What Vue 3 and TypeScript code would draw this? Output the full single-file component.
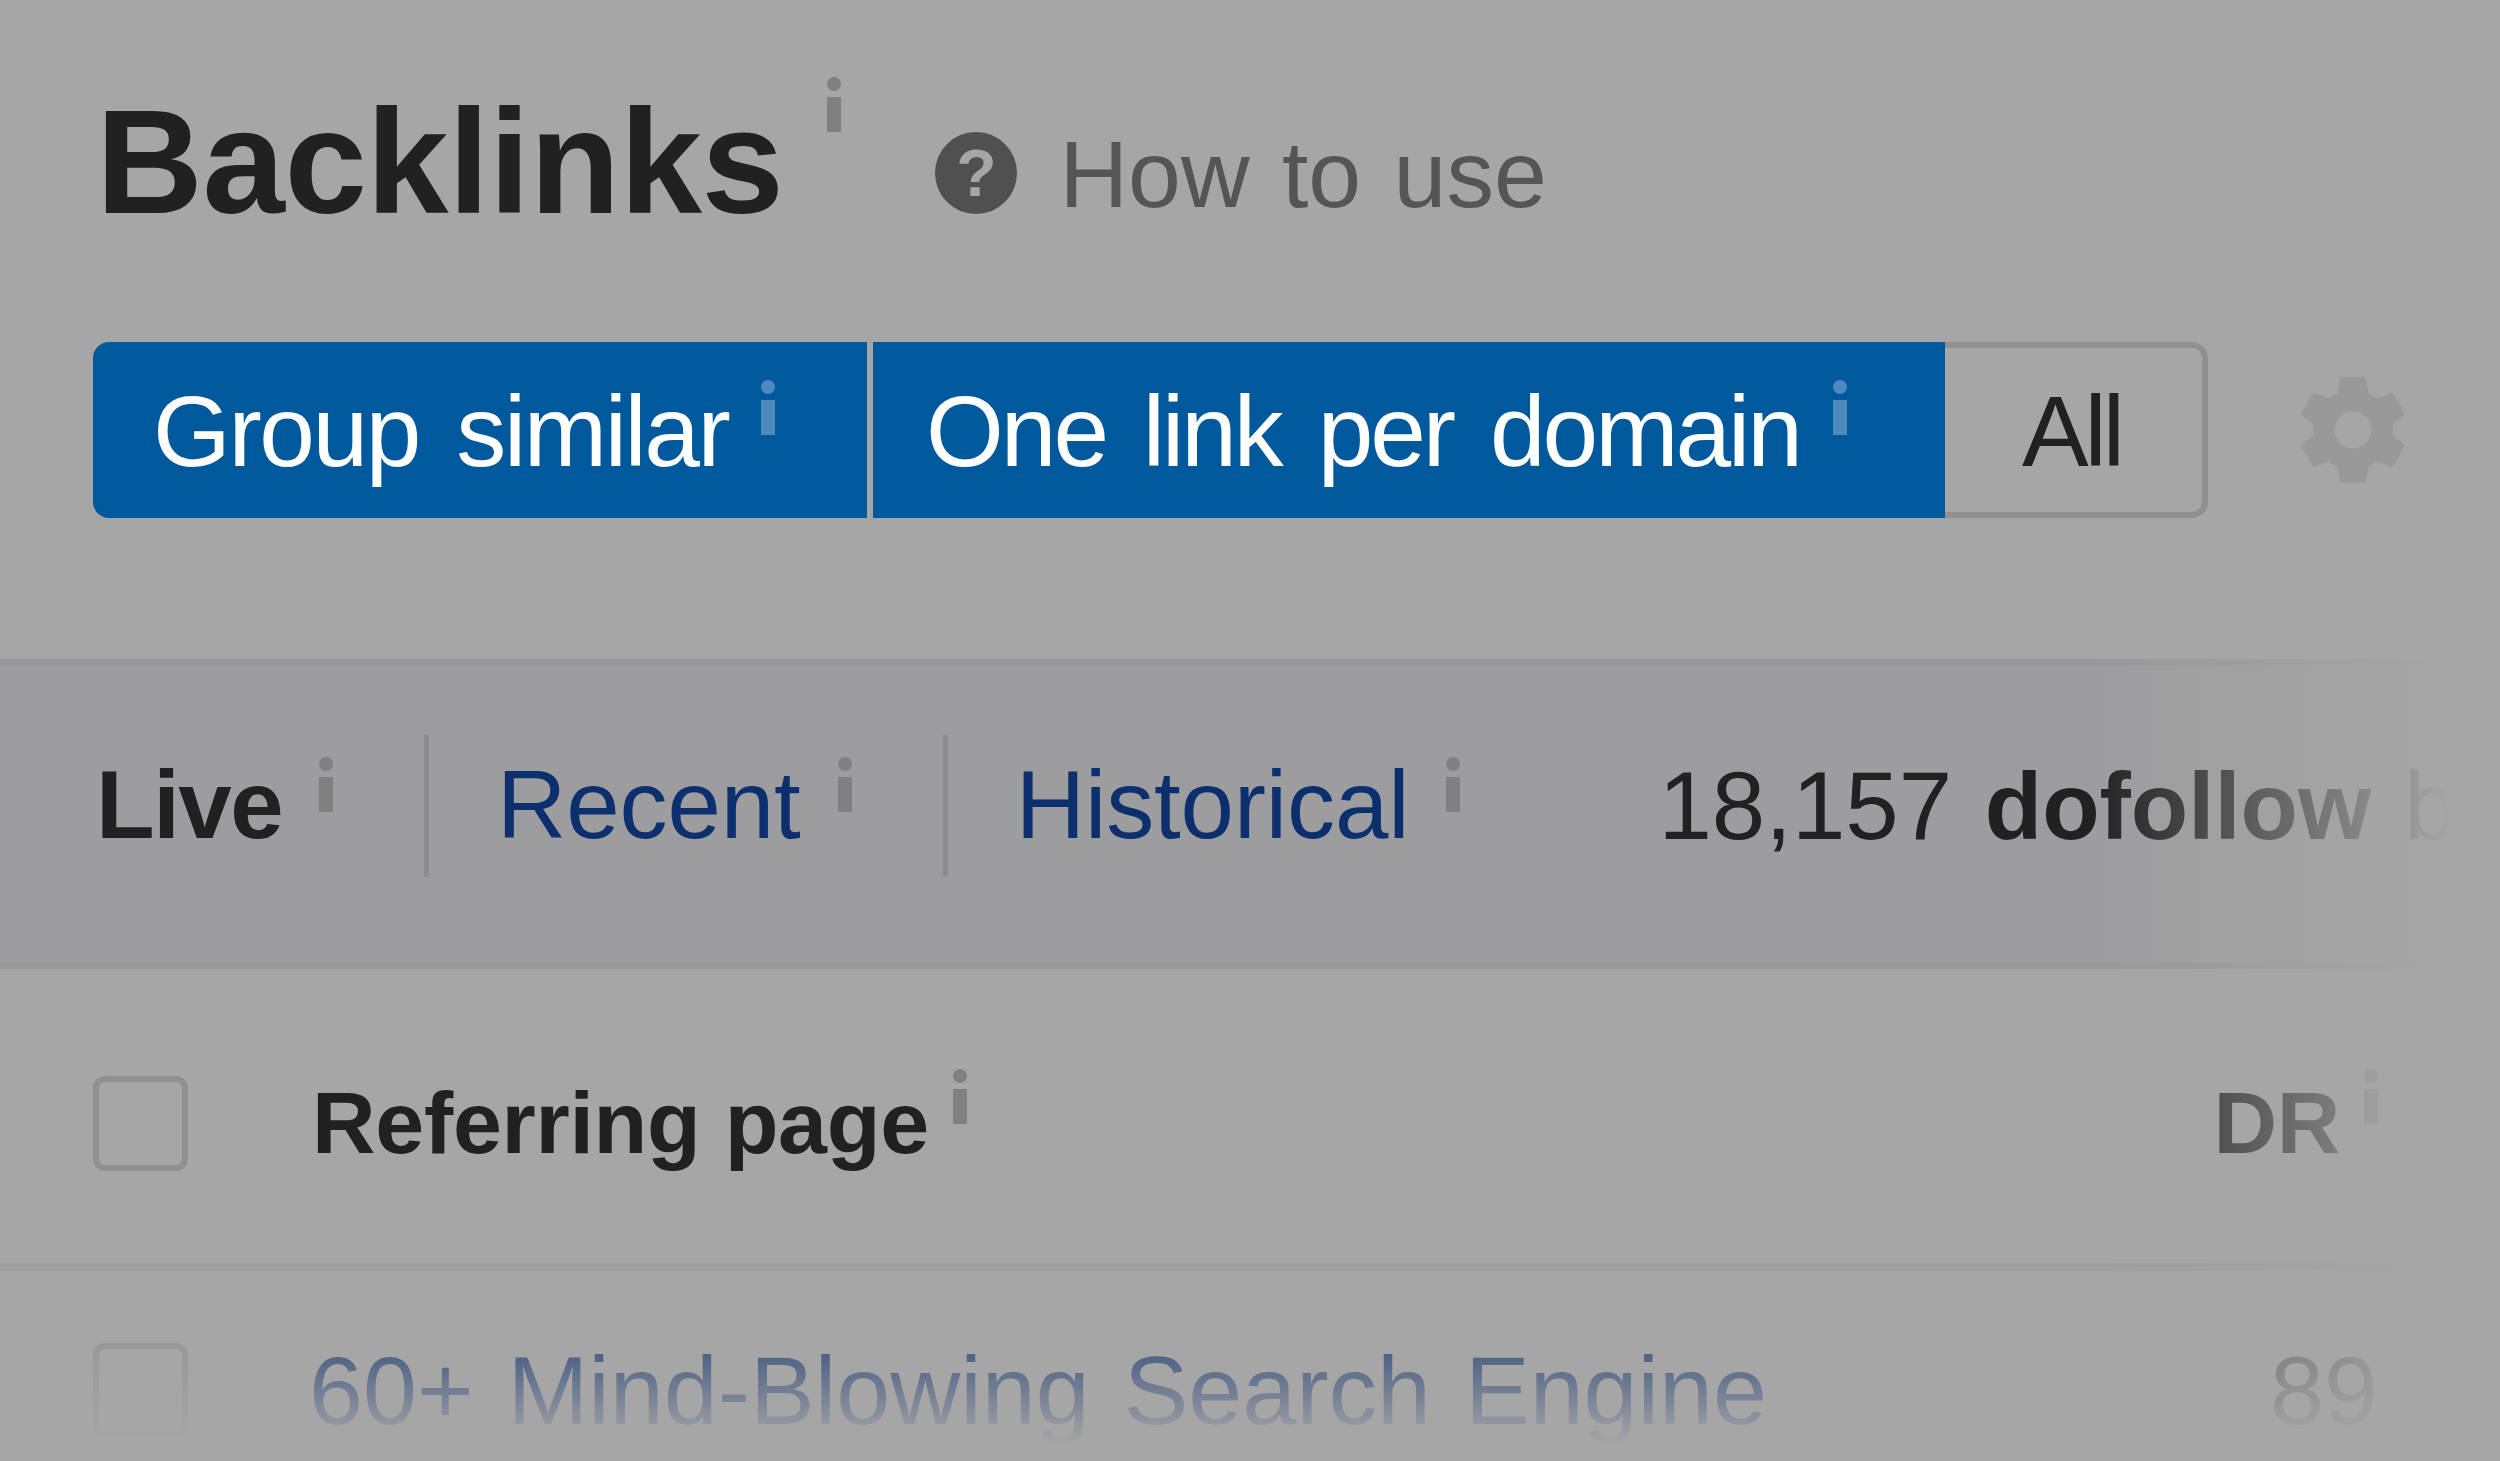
<script setup lang="ts">
const tabs = [
  { label: 'Live', active: true },
  { label: 'Recent', active: false },
  { label: 'Historical', active: false }
]
</script>

<template>
  <div class="page">
    <header class="head">
      <h1 class="title">Backlinks</h1>
      <svg class="info title-info" viewBox="0 0 14 55"><circle cx="7" cy="7" r="7" /><rect y="20" width="14" height="35" /></svg>
      <a class="help">
        <span class="help-icon">?</span>
        <span class="help-text">How to use</span>
      </a>
    </header>

    <div class="toolbar">
      <div class="switch">
        <button class="opt on first">
          Group similar
          <svg class="info" viewBox="0 0 14 55"><circle cx="7" cy="7" r="7" /><rect y="20" width="14" height="35" /></svg>
        </button>
        <button class="opt on second">
          One link per domain
          <svg class="info" viewBox="0 0 14 55"><circle cx="7" cy="7" r="7" /><rect y="20" width="14" height="35" /></svg>
        </button>
        <button class="opt all">All</button>
      </div>
      <svg class="gear" viewBox="2 2 20 20">
        <path d="M19.43 12.98c.04-.32.07-.64.07-.98s-.03-.66-.07-.98l2.11-1.65c.19-.15.24-.42.12-.64l-2-3.46c-.12-.22-.39-.3-.61-.22l-2.49 1c-.52-.4-1.08-.73-1.69-.98l-.38-2.65C14.46 2.18 14.25 2 14 2h-4c-.25 0-.46.18-.49.42l-.38 2.65c-.61.25-1.17.59-1.69.98l-2.49-1c-.23-.09-.49 0-.61.22l-2 3.46c-.13.22-.07.49.12.64l2.11 1.65c-.04.32-.07.65-.07.98s.03.66.07.98l-2.11 1.65c-.19.15-.24.42-.12.64l2 3.46c.12.22.39.3.61.22l2.49-1c.52.4 1.08.73 1.69.98l.38 2.65c.03.24.24.42.49.42h4c.25 0 .46-.18.49-.42l.38-2.65c.61-.25 1.17-.59 1.69-.98l2.49 1c.23.09.49 0 .61-.22l2-3.46c.12-.22.07-.49-.12-.64l-2.11-1.65zM12 15.5c-1.93 0-3.5-1.57-3.5-3.5s1.57-3.5 3.5-3.5 3.5 1.57 3.5 3.5-1.57 3.5-3.5 3.5z" />
      </svg>
    </div>

    <nav class="band">
      <div v-for="tab in tabs" :key="tab.label" class="tab" :class="{ active: tab.active }">
        <span>{{ tab.label }}</span>
        <svg class="info" viewBox="0 0 14 55"><circle cx="7" cy="7" r="7" /><rect y="20" width="14" height="35" /></svg>
      </div>
      <div class="count">18,157 <b>dofollow</b> <span>b</span></div>
    </nav>

    <div class="thead">
      <span class="check"></span>
      <span class="col-page">Referring page</span>
      <svg class="info" viewBox="0 0 14 55"><circle cx="7" cy="7" r="7" /><rect y="20" width="14" height="35" /></svg>
      <span class="col-dr">DR</span>
      <svg class="info" viewBox="0 0 14 55"><circle cx="7" cy="7" r="7" /><rect y="20" width="14" height="35" /></svg>
    </div>

    <div class="trow">
      <span class="check"></span>
      <a class="row-link">60+ Mind-Blowing Search Engine</a>
      <span class="row-dr">89</span>
    </div>

    <div class="fade-right"></div>
    <div class="fade-bottom"></div>
  </div>
</template>

<style>
html,
body {
  margin: 0;
  background: #a6a6a6;
}
</style>

<style scoped>
.page {
  position: relative;
  width: 2500px;
  height: 1461px;
  overflow: hidden;
  background: #a6a6a6;
  color: #212121;
  font-family: "Liberation Sans", Arial, sans-serif;
}

.info {
  display: block;
  flex: none;
  width: 14px;
  height: 55px;
  fill: #808080;
}

.head {
  display: flex;
  align-items: flex-start;
  box-sizing: border-box;
  height: 342px;
  padding-left: 96px;
}

.title {
  margin: 88px 0 0;
  font-size: 148px;
  line-height: 148px;
  font-weight: 700;
  letter-spacing: -0.4px;
}

.title-info {
  margin: 77px 0 0 44px;
}

.help {
  display: flex;
  align-items: flex-start;
  margin-left: 94px;
  color: #555;
}

.help-icon {
  display: flex;
  align-items: center;
  justify-content: center;
  width: 82px;
  height: 82px;
  margin-top: 132px;
  border-radius: 50%;
  background: #505050;
  color: #a6a6a6;
  font-size: 66px;
  font-weight: 700;
  line-height: 82px;
}

.help-text {
  margin: 127px 0 0 42px;
  font-size: 95px;
  line-height: 95px;
  word-spacing: 6px;
}

.toolbar {
  display: flex;
  align-items: center;
  padding-left: 93px;
}

.switch {
  display: flex;
  height: 176px;
}

.opt {
  display: flex;
  align-items: flex-start;
  box-sizing: border-box;
  height: 100%;
  margin: 0;
  border: 0;
  font-family: inherit;
  font-size: 100px;
  line-height: 100px;
  letter-spacing: -3px;
  word-spacing: 12px;
  white-space: nowrap;
}

.on {
  background: #00589d;
  color: #fff;
}

.on .info {
  fill: #4f8abf;
  margin: -1px 0 0 33px;
}

.first {
  width: 774px;
  padding: 39px 0 0 60px;
  border-radius: 16px 0 0 16px;
  letter-spacing: -2.4px;
}

.second {
  width: 1072px;
  margin-left: 6px;
  padding: 39px 0 0 53px;
}

.all {
  justify-content: center;
  width: 263px;
  padding: 33px 4px 0 0;
  background: transparent;
  border: 6px solid #909090;
  border-left: 0;
  border-radius: 0 16px 16px 0;
  color: #212121;
  letter-spacing: -4px;
}

.gear {
  width: 106px;
  height: 108px;
  margin-left: 92px;
  fill: #999;
}

.band {
  display: flex;
  align-items: center;
  box-sizing: border-box;
  height: 310px;
  margin-top: 141px;
  padding: 0 0 16px 96px;
  border-top: 6px solid #989898;
  border-bottom: 6px solid #989898;
  background: #9d9d9f;
  font-size: 96px;
  line-height: 96px;
  white-space: nowrap;
}

.tab {
  display: flex;
  align-items: flex-start;
  height: 142px;
  padding-top: 22px;
  box-sizing: border-box;
  color: #0c2f6e;
  letter-spacing: -0.1px;
}

.tab + .tab {
  margin-left: 91px;
  padding-left: 68px;
  border-left: 5px solid #8c8c8c;
}

.tab .info {
  margin: 0 0 0 37px;
}

.active {
  color: #212121;
  font-weight: 700;
  letter-spacing: -1.5px;
}

.count {
  margin-left: 198px;
  word-spacing: 6px;
}

.count b {
  font-size: 94px;
  letter-spacing: 0;
}

.thead {
  display: flex;
  align-items: flex-start;
  box-sizing: border-box;
  height: 302px;
  padding: 107px 122px 0 93px;
  border-bottom: 8px solid #9e9e9e;
  font-size: 88px;
  line-height: 88px;
  font-weight: 700;
  letter-spacing: -0.3px;
}

.check {
  flex: none;
  box-sizing: border-box;
  width: 95px;
  height: 95px;
  border: 6px solid #909090;
  border-radius: 12px;
}

.col-page {
  margin: 3px 24px 0 124px;
}

.thead .info {
  margin-top: -7px;
}

.col-dr {
  margin: 3px 24px 0 auto;
}

.trow {
  display: flex;
  align-items: flex-start;
  padding: 72px 122px 0 93px;
  font-size: 97px;
  line-height: 97px;
  white-space: nowrap;
}

.row-link {
  margin: -1px 0 0 121px;
  color: #0c2f6e;
  word-spacing: 7px;
}

.row-dr {
  margin: -1px 0 0 auto;
}

.fade-right {
  position: absolute;
  top: 655px;
  right: 0;
  bottom: 0;
  width: 410px;
  background: linear-gradient(to right, rgba(166, 166, 166, 0), #a6a6a6 88%);
}

.fade-bottom {
  position: absolute;
  left: 0;
  right: 0;
  bottom: 0;
  height: 175px;
  background: linear-gradient(to bottom, rgba(166, 166, 166, 0), #a6a6a6 90%);
}
</style>
